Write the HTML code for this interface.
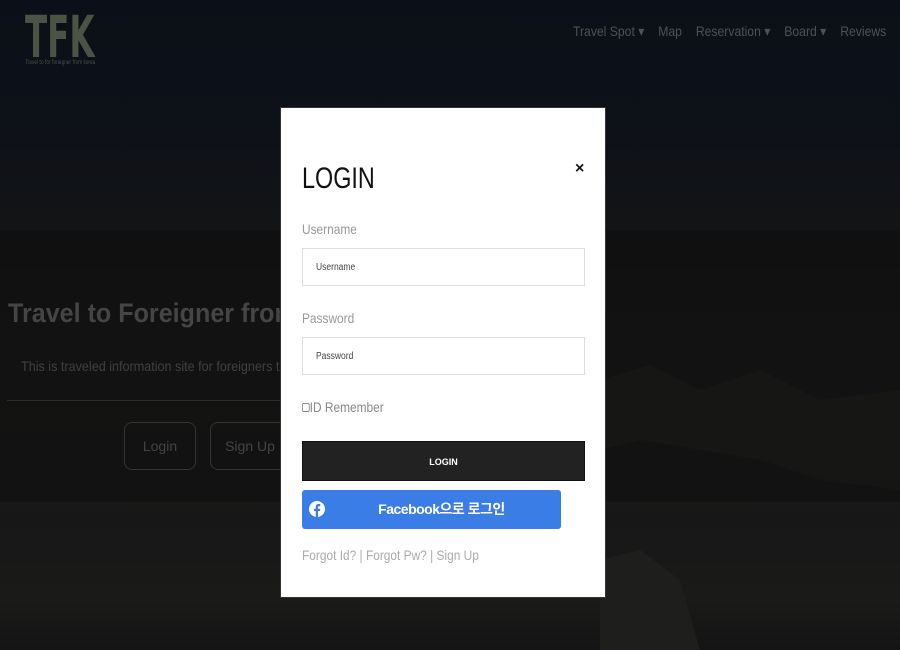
<!DOCTYPE html>
<html><head><meta charset="utf-8"><style>
*{margin:0;padding:0;box-sizing:border-box}
body{width:900px;height:650px;overflow:hidden;position:relative;font-family:"Liberation Sans","Noto Sans CJK KR",sans-serif;
background:linear-gradient(180deg,#0b0f17 0px,#0d1118 120px,#131416 230px,#171717 300px,#1a1a19 420px,#171717 520px,#1a1a19 600px,#141414 650px)}
.mt{position:absolute;left:0;top:260px;width:900px;height:390px}
.band{position:absolute;left:0;top:230px;width:900px;height:272px;background:rgba(10,10,10,.45)}
.logo{position:absolute;left:25px;top:8px;color:#4a5344;font-weight:bold;font-size:58px;font-family:"DejaVu Sans",sans-serif;transform:scaleX(.56);transform-origin:0 0;line-height:1}
.logo small{position:absolute;left:1px;top:52px;font-size:6px;font-weight:normal;white-space:nowrap;transform:scaleX(1.25);transform-origin:0 0}
.nav{position:absolute;top:23px;left:573px;color:#4e5157;font-size:14px;white-space:nowrap;transform:scaleX(.87);transform-origin:0 0}
.nav span{margin-right:16px}
.h1{position:absolute;left:8px;top:298px;font-size:27px;font-weight:bold;color:#454545;white-space:nowrap;transform:scaleX(.93);transform-origin:0 0}
.p{position:absolute;left:21px;top:358px;font-size:14px;color:#404040;white-space:nowrap;transform:scaleX(.9);transform-origin:0 0}
.hr{position:absolute;left:7px;top:400px;width:275px;border-top:1px solid #2c2c2c}
.btn{position:absolute;top:422px;height:48px;border:1px solid #333;border-radius:8px;color:#444;font-size:14px;text-align:center;line-height:46px}
.modal{position:absolute;left:280px;top:107px;width:326px;height:491px;background:#fff;border:1px solid #333}
.modal h2{position:absolute;left:21px;top:54px;font-size:30px;font-weight:normal;color:#111;transform:scaleX(.78);transform-origin:0 0}
.x{position:absolute;left:294px;top:52px;font-size:16px;font-weight:bold;color:#111}
.lbl{position:absolute;left:21px;font-size:14px;color:#999;transform:scaleX(.85);transform-origin:0 0;white-space:nowrap}
.in{position:absolute;left:21px;width:283px;height:38px;border:1px solid #ddd;font-size:10px;color:#444;padding-left:13px;line-height:37px}
.in i{font-style:normal;display:inline-block;transform:scaleX(.85);transform-origin:0 0}
.lb{position:absolute;left:21px;top:333px;width:283px;height:40px;background:#222;color:#fff;font-size:9px;font-weight:bold;text-align:center;line-height:40px;border:1px solid #111}
.fb{position:absolute;left:21px;top:382px;width:259px;height:39px;background:#3b7de6;border-radius:3px;color:#fff;font-weight:bold;font-size:14px;text-align:center;line-height:38px;padding-left:20px;letter-spacing:-.5px}
.fb svg{position:absolute;left:7px;top:10px}
.links{position:absolute;left:21px;top:439px;font-size:14px;color:#aaa;transform:scaleX(.85);transform-origin:0 0;white-space:nowrap}
</style></head><body>
<svg class="mt" viewBox="0 0 900 390" preserveAspectRatio="none">
<path d="M600 120 L650 105 L700 130 L760 110 L820 140 L900 130 L900 230 L820 220 L760 200 L700 190 L640 180 L600 190Z" fill="#20201e" opacity=".8"/>
<path d="M600 300 L640 290 L680 320 L700 390 L600 390Z" fill="#1e1e1d"/>
</svg>
<div class="band"></div>
<div class="logo">TFK<small>Travel to for foreigner from korea</small></div>
<div class="nav"><span>Travel Spot ▾</span><span>Map</span><span>Reservation ▾</span><span>Board ▾</span><span>Reviews</span></div>
<div class="h1">Travel to Foreigner from Korea</div>
<div class="p">This is traveled information site for foreigners to korea</div>
<div class="hr"></div>
<div class="btn" style="left:124px;width:72px">Login</div>
<div class="btn" style="left:210px;width:80px">Sign Up</div>
<div class="modal">
<h2>LOGIN</h2><div class="x">×</div>
<div class="lbl" style="top:113px">Username</div>
<div class="in" style="top:140px"><i>Username</i></div>
<div class="lbl" style="top:202px">Password</div>
<div class="in" style="top:229px"><i>Password</i></div>
<div class="lbl" style="top:291px;color:#888"><span style="display:inline-block;width:9px;height:9px;border:1px solid #888;border-radius:2px"></span>ID Remember</div>
<div class="lb">LOGIN</div>
<div class="fb"><svg width="16" height="18" viewBox="0 0 16 16"><circle cx="8" cy="8" r="8" fill="#fff"/><path d="M9 16V10h2l.3-2.3H9V6.3c0-.6.2-1 1-1h1.3V3.2C11 3.1 10.4 3 9.7 3 8 3 6.8 4 6.8 5.9v1.8H5V10h1.8v6Z" fill="#3b7de6"/></svg>Facebook으로 로그인</div>
<div class="links">Forgot Id? | Forgot Pw? | Sign Up</div>
</div>
</body></html>
